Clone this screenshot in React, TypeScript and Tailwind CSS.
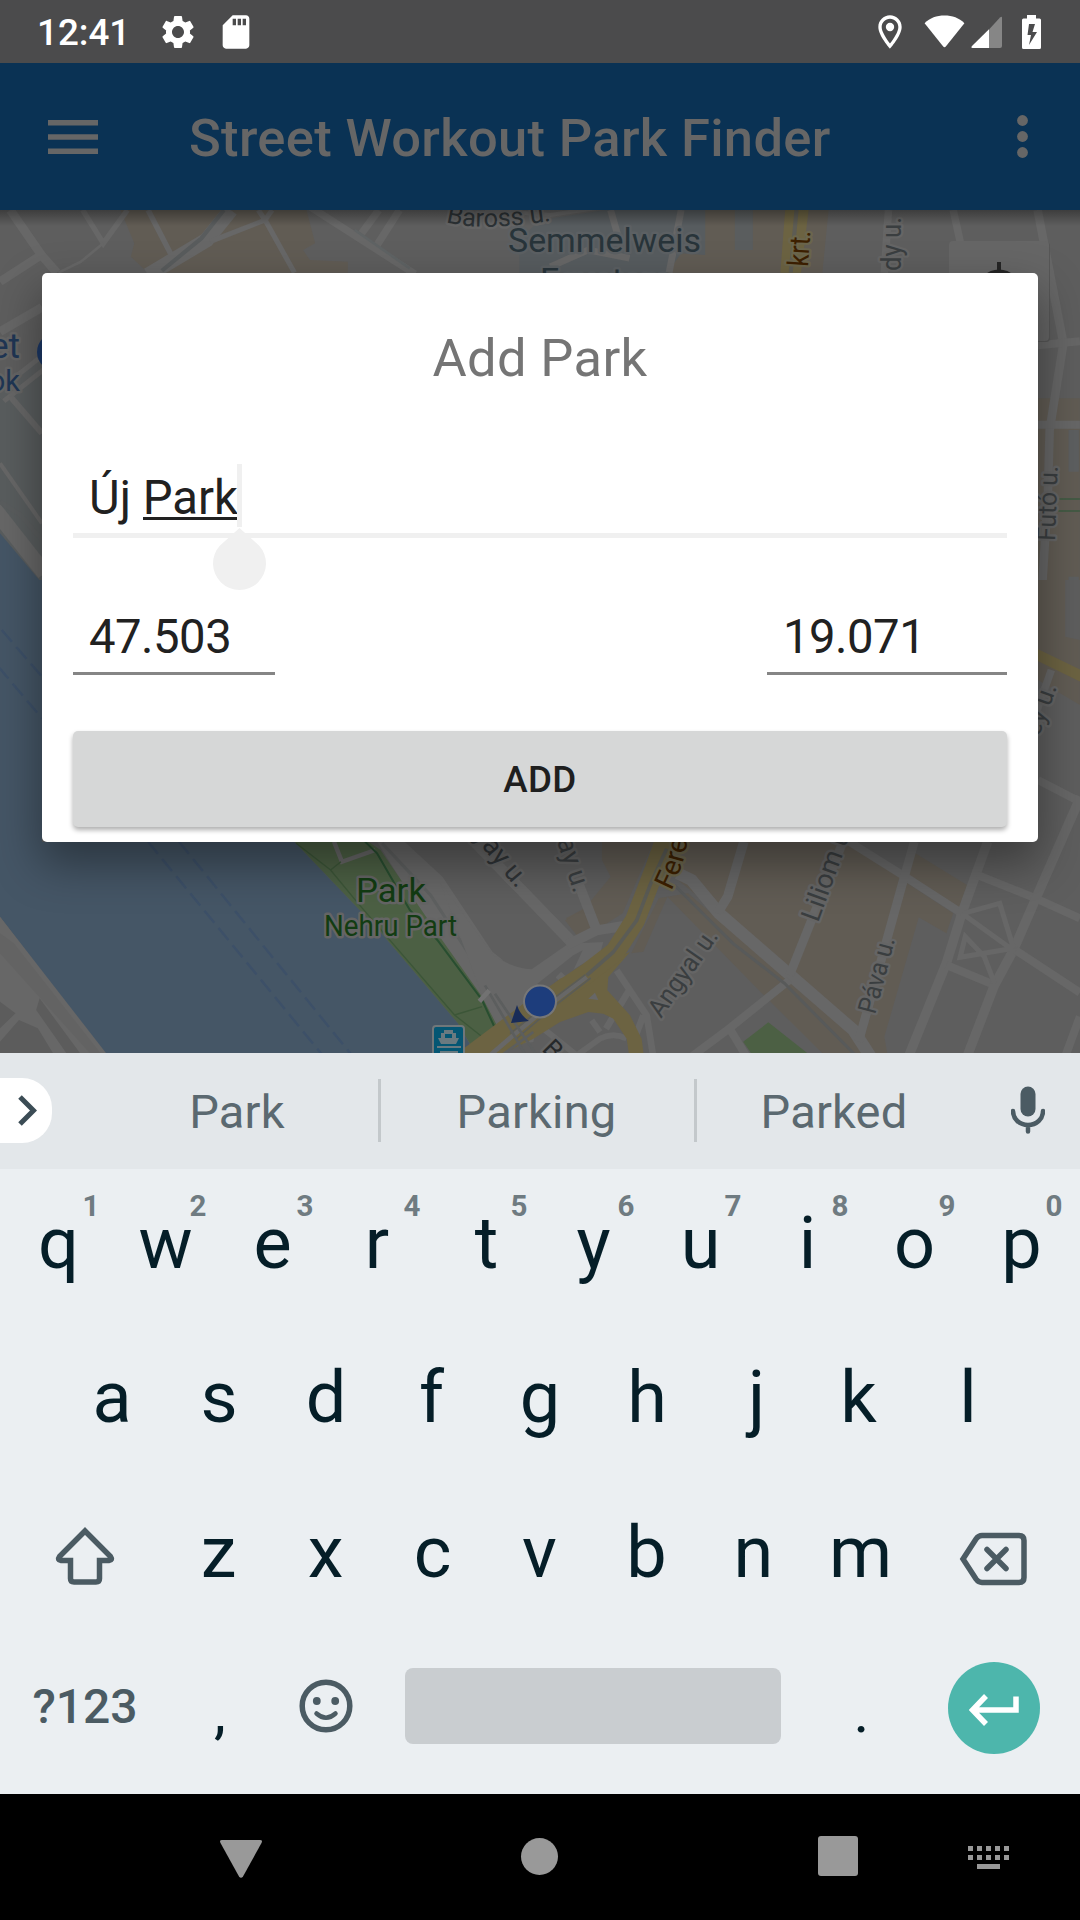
import React from "react";
import { MdSettings, MdSdStorage, MdOutlineLocationOn } from "react-icons/md";

const BASE = "#5e5e5e";
const ROAD = "#676767";
const BEIGE = "#615c54";
const GREEN = "#4c6044";
const YELLOW = "#6c6342";
const WATER = "#455666";

function StatusBar() {
  return (
    <header className="flex h-[63px] shrink-0 items-center justify-between bg-[#4b4b4c] pl-[37px] pr-[39px] text-white">
      <div className="flex items-center">
        <span className="w-[121px] pt-1 text-[36.75px] font-medium leading-none">12:41</span>
        <MdSettings className="size-10" />
        <MdSdStorage className="ml-[18px] size-10" />
      </div>
      <div className="flex items-center">
        <MdOutlineLocationOn className="mr-[14px] size-10" />
        <svg className="mr-[6px] h-[34px] w-[41px]" viewBox="0 0 41 34">
          <path d="M0.6 8.2C6 3 12.600 0.600 20.500 0.600S35 3 40.400 8.200L22 31.300Q20.500 33 19 31.300Z" fill="#fff" />
        </svg>
        <svg className="mr-5 h-[34px] w-[31px]" viewBox="0 0 31 34">
          <path d="M18 14.500L29 2.500Q31 0.600 31 3V31Q31 33 29 33H18Z" fill="#868686" />
          <path d="M18 14.300V33H1.500Q-0.500 33 1 31Z" fill="#fff" />
        </svg>
        <svg className="h-[34px] w-[19px]" viewBox="0 0 19 34">
          <path d="M5 0H14V3.500H17.500Q19 3.500 19 5V32.500Q19 34 17.500 34H1.500Q0 34 0 32.500V5Q0 3.500 1.500 3.500H5Z" fill="#fff" />
          <path d="M7 9H13L10.500 17H15L7 30L9 20H5.500Z" fill="#4b4b4c" />
        </svg>
      </div>
    </header>
  );
}

function AppBar() {
  return (
    <div className="flex h-[147px] shrink-0 items-center bg-[#0a3254] pl-12 pr-[52px] text-[#666666]">
      <svg className="h-[34px] w-[50px]" viewBox="0 0 50 34">
        <path d="M0 0H50V5.500H0ZM0 14.200H50V19.700H0ZM0 28.400H50V34H0Z" fill="currentColor" />
      </svg>
      <h1 className="ml-[91px] flex-1 whitespace-nowrap pt-1 text-[52.500px] font-medium leading-none tracking-[0.33px]">Street Workout Park Finder</h1>
      <svg className="h-[43px] w-[11px]" viewBox="0 0 11 43">
        <circle cx="5.500" cy="5.500" r="5.400" fill="currentColor" />
        <circle cx="5.500" cy="21.500" r="5.400" fill="currentColor" />
        <circle cx="5.500" cy="37.500" r="5.400" fill="currentColor" />
      </svg>
    </div>
  );
}

function MapTopLeft() {
  return (
    <g transform="translate(0 200) scale(.34435 .33333)" fill="none" stroke={ROAD}>
      <path d="M350 30H890L915 130 880 150 900 180 1010 185V218H430L380 170 390 130Z" fill={BEIGE} stroke="none" />
      <path d="M0 570L122 480V1150L0 1000Z" fill="#595d5e" stroke="none" />
      <path d="M30 30L120 165L165 218M120 165L0 245" strokeWidth="26" />
      <path d="M240 30L300 130L370 30M430 30L500 170" strokeWidth="16" />
      <path d="M300 130L235 185L170 218" strokeWidth="8" />
      <path d="M670 30L600 120L430 225" strokeWidth="44" />
      <path d="M650 30L585 115L470 212" stroke="#595c5d" strokeWidth="12" />
      <path d="M610 125L770 60L790 30M750 30L770 60L855 218" strokeWidth="15" />
      <path d="M900 20L1205 222M1160 30L1095 135M1100 30L1050 100" strokeWidth="22" />
      <path d="M1030 90L1190 205" stroke="#5f6364" strokeWidth="8" />
      <path d="M0 395L122 322" strokeWidth="26" />
      <path d="M0 590L122 490" strokeWidth="50" />
      <path d="M0 590L122 490" stroke="#5b5e5f" strokeWidth="20" />
      <path d="M30 590L122 700" strokeWidth="18" />
      <path d="M0 790L122 970" strokeWidth="12" />
      <path d="M-60 870L130 1120" strokeWidth="46" />
      <path d="M0 905L60 945L122 1020" stroke="#5a5d5e" strokeWidth="14" />
      <path d="M0 1000L122 1150V1200H0Z" fill={WATER} stroke="none" />
    </g>
  );
}

function MapTopRight() {
  return (
    <g transform="translate(540 200) scale(.34435 .33333)" fill="none" stroke={ROAD}>
      <path d="M-60 120L0 60 190 30H480V170L400 218H-60Z" fill="#575c5f" stroke="none" />
      <path d="M480 30H838L820 218H370L410 160 480 165Z" fill={BEIGE} stroke="none" />
      <path d="M566 30H618V150H566Z" fill="#5a5d5e" stroke="none" />
      <path d="M-160 30L30 45L190 20" strokeWidth="12" />
      <path d="M205 30L230 120M410 30L375 218M30 200L140 150L260 175" strokeWidth="20" />
      <path d="M712 30H780L758 218H698Z" fill={YELLOW} stroke="none" />
      <path d="M745 30L728 218" stroke="#5d5c54" strokeWidth="12" />
      <path d="M1012 30L1000 218M1200 30L1240 218" strokeWidth="22" />
      <path d="M1446 595H1568V1200H1446Z" fill={BEIGE} stroke="none" />
      <path d="M1445 30L1520 430L1480 690L1475 880L1456 1200" strokeWidth="25" />
      <path d="M1446 436L1568 424M1446 674H1568" strokeWidth="24" />
      <path d="M1550 690V815M1550 1130V1200" stroke="#5d5f60" strokeWidth="30" />
      <path d="M1505 897H1568M1505 933H1568" stroke="#3d5a40" strokeWidth="5" />
    </g>
  );
}

function MapBottomLeft() {
  return (
    <g transform="translate(0 580) scale(.34435 .33333)" fill="none" stroke={ROAD}>
      <path d="M0 0H122V785H855L1100 1050 1330 1330 1385 1430H310L0 1010Z" fill={WATER} stroke="none" />
      <path d="M0 1010L316 1430H0Z" fill={ROAD} stroke="none" />
      <path d="M0 1060L40 1090L300 1430H270L0 1120Z" fill="#636363" stroke="none" />
      <path d="M0 1265L45 1300L0 1345ZM0 1385L55 1320L110 1345L160 1430H0ZM115 1255L240 1430H200L105 1290Z" fill="#5c5c5c" stroke="none" />
      <path d="M430 785L940 1430M520 785L1025 1430M5 150L122 290M-5 260L122 415" stroke="#3d5068" strokeWidth="7" strokeDasharray="46 20" />
      <path d="M1095 785H1175L1285 890 1430 1115 1460 1140V1350L1430 1340Z" fill={ROAD} stroke="none" />
      <path d="M855 785H1070L1105 810 1270 1060 1400 1250 1445 1340 1370 1400 1330 1330 1100 1050Z" fill={GREEN} stroke="none" />
      <path d="M970 785L993 845L1090 810" strokeWidth="13" />
      <path d="M1060 785L1095 820L1190 990L1270 1080L1400 1260L1440 1350" stroke="#284e30" strokeWidth="6" />
      <path d="M860 790L960 870L1040 970L1320 1305L1400 1370M960 870L990 845M1320 1305L1400 1280" stroke="#3c5638" strokeWidth="4" />
      <path d="M1110 790L1250 945L1430 1230" stroke="#5e6060" strokeWidth="9" />
    </g>
  );
}

function MapBottomRight() {
  return (
    <g transform="translate(540 580) scale(.34435 .33333)" fill="none" stroke={ROAD}>
      <path d="M1446 0H1568V375L1446 300Z" fill={BEIGE} stroke="none" />
      <path d="M1525 0H1568V180L1525 170Z" fill={BASE} stroke="none" />
      <path d="M180 785H330L240 1000 150 1060 75 1015 130 985 205 890 180 840Z" fill={BEIGE} stroke="none" />
      <path d="M400 785H880L1060 890 1000 1130 920 1370 700 1180 520 1000 400 900Z" fill={BEIGE} stroke="none" />
      <path d="M1090 820L1240 915 1215 990 1065 890Z" fill={BEIGE} stroke="none" />
      <path d="M1060 905L1200 1000 1180 1060 1100 1012 1000 1370 1010 1430H925L990 1200Z" fill={BEIGE} stroke="none" />
      <path d="M370 950L430 940 880 1340 960 1430H830L640 1235Z" fill={BEIGE} stroke="none" />
      <path d="M370 950L345 955L265 1120L300 1115Z" fill={BEIGE} stroke="none" />
      <path d="M590 1385L663 1327 775 1418 780 1430H620Z" fill={GREEN} stroke="none" />
      <path d="M400 880L440 900L520 1000L910 1350L960 1430" strokeWidth="36" />
      <path d="M592 785L545 950L515 1000" strokeWidth="28" />
      <path d="M890 780L1060 890L1225 1000" strokeWidth="24" />
      <path d="M1087 785L1050 920L925 1385" strokeWidth="26" />
      <path d="M880 785L725 1185" strokeWidth="26" />
      <path d="M725 1200L550 1345L440 1430M550 1345L600 1430" strokeWidth="24" />
      <path d="M1300 785L1225 1000L1180 1150L1070 1430" strokeWidth="28" />
      <path d="M1180 1155L1320 1215M1270 885L1440 955L1568 1015M1446 600L1568 665" strokeWidth="24" />
      <path d="M1570 650L1440 955L1375 1110L1320 1215L1240 1430" strokeWidth="28" />
      <path d="M1380 1110L1568 1238M1568 1310L1525 1430" strokeWidth="24" />
      <path d="M1230 1000L1335 970L1375 1105M1225 1000L1380 1115M1375 1105L1220 1132L1235 1070L1290 1130L1320 1210" strokeWidth="15" />
      <path d="M390 915L560 1090L710 1210L920 1430" stroke="#585a5a" strokeWidth="9" />
      <path d="M1435 220L1575 290" stroke={YELLOW} strokeWidth="32" />
      <path d="M1485 270L1440 400" strokeWidth="22" />
    </g>
  );
}

function BridgeJunction() {
  return (
    <g transform="translate(400 842) scale(.33333)" fill="none" stroke={ROAD} strokeLinejoin="round">
      <path d="M120 120L280 340Q335 377 395 382L505 305L610 300L600 335L440 430L400 600L330 610L250 470Z" fill={ROAD} stroke="none" />
      <path d="M412 425L520 340L548 325L520 385L440 440Z" fill={BASE} stroke="none" />
      <path d="M495 235L550 205L570 262L530 280Z" fill={BEIGE} stroke="none" />
      <path d="M215 -10L515 300" strokeWidth="34" />
      <path d="M530 110L588 260M500 310L590 265L670 252" strokeWidth="30" />
      <path d="M475 398L490 412" strokeWidth="24" />
      <path d="M650 385L740 520L760 645M690 440L618 560M730 520L700 600" strokeWidth="20" />
      <path d="M430 560L530 640L600 590Q640 570 680 590M575 535L600 570" strokeWidth="18" />
      <path d="M690 330L625 405L622 445L690 520L725 590L732 645H688L680 590L640 530L610 515L565 510L480 540L400 590L290 645H190L480 410Z" fill={YELLOW} stroke="none" />
      <path d="M800 -20L765 80L705 235L645 330L560 395L470 455L380 515L200 650" stroke={YELLOW} strokeWidth="60" />
      <path d="M565 470L585 452L595 474Z" fill={ROAD} stroke="none" />
      <path d="M800 20L750 130L710 235L640 330L560 400" stroke="#5b5c56" strokeWidth="11" />
      <path d="M560 405L460 480L340 580L270 640" strokeWidth="14" />
      <path d="M556 398L456 473L330 575M572 408L470 487L350 590" stroke="#5b5c56" strokeWidth="5" />
      <path d="M255 430L380 645M285 455L410 640M305 640L400 570" stroke="#5c5e5e" strokeWidth="8" />
      <path d="M238 478L268 445" stroke="#727272" strokeWidth="14" />
    </g>
  );
}

function MapLabels() {
  return (
    <g stroke="#656565" strokeWidth="5" strokeLinejoin="round" style={{ paintOrder: "stroke" }} fill="#3a3e40" fontSize="26">
      <path id="baross" d="M446 222Q482 233 562 219" fill="none" stroke="none" />
      <path id="ferenc" d="M671 891Q683 868 687 844L692 790" fill="none" stroke="none" />
      <text fontSize="25.500" fill="#2c3235"><textPath href="#baross">Baross u.</textPath></text>
      <g fill="#28343a" fontSize="34" stroke="#5c6063">
        <text x="508" y="252" textLength="193" lengthAdjust="spacingAndGlyphs">Semmelweis</text>
        <text x="540" y="292">Egyetem</text>
      </g>
      <g fill="#1f3654" textAnchor="end">
        <text x="20" y="358" fontSize="35">et</text>
        <text x="20" y="391" fontSize="29">ok</text>
      </g>
      <text transform="translate(808 267) rotate(-86)" fontSize="29" fill="#3d2000" stroke="#6b664d" textLength="36" lengthAdjust="spacingAndGlyphs">krt.</text>
      <text transform="translate(901 271) rotate(-90)" fontSize="28" textLength="54" lengthAdjust="spacingAndGlyphs">dy u.</text>
      <text transform="translate(1055 541) rotate(-88)" textLength="75" lengthAdjust="spacingAndGlyphs">Futó u.</text>
      <text transform="translate(1057 687) rotate(-70)" textAnchor="end">ey u.</text>
      <text transform="translate(517 889) rotate(50)" textAnchor="end" fontSize="27" fill="#303437">yay u.</text>
      <text transform="translate(574 894) rotate(72)" textAnchor="end" fontSize="27">nay u.</text>
      <text fontSize="28" fill="#3d2000" stroke="#6b664d"><textPath href="#ferenc">Feren</textPath></text>
      <text transform="translate(661 1019) rotate(-55)" textLength="101" lengthAdjust="spacingAndGlyphs">Angyal u.</text>
      <text transform="translate(818 923) rotate(-70)" fontSize="27">Liliom u.</text>
      <text transform="translate(875 1015) rotate(-75)" textLength="78" lengthAdjust="spacingAndGlyphs">Páva u.</text>
      <text transform="translate(541 1050) rotate(45)" fill="#26292b">B</text>
      <g fill="#123c12">
        <text x="356" y="902" fontSize="34" textLength="70" lengthAdjust="spacingAndGlyphs">Park</text>
        <text x="324" y="936" fontSize="30" textLength="133" lengthAdjust="spacingAndGlyphs">Nehru Part</text>
      </g>
    </g>
  );
}

function CityMap() {
  return (
    <svg className="absolute inset-0 h-full w-full" viewBox="0 210 1080 843" preserveAspectRatio="none">
      <rect x="0" y="210" width="1080" height="843" fill={BASE} />
      <MapTopLeft />
      <MapTopRight />
      <MapBottomRight />
      <MapBottomLeft />
      <BridgeJunction />
      <circle cx="56" cy="352" r="19" fill="#1c3866" />
      <circle cx="540" cy="1001.500" r="16" fill="#1d3d7c" stroke="#777777" strokeWidth="2" />
      <path d="M511 1023L517 1005Q520 1015 529 1021Z" fill="#192c58" />
      <rect x="433" y="1026" width="31" height="40" rx="3" fill="#045673" stroke="#70777a" strokeWidth="2" />
      <path d="M444 1030H453V1033H456V1038H459L456 1044H441L438 1038H441V1033H444ZM437 1046H461V1048H437ZM440 1051H458V1053H440Z" fill="#6a7a80" />
      <path d="M445 1034H452V1038H445Z" fill="#045673" />
      <MapLabels />
      <rect x="950" y="242" width="100" height="100" rx="4" fill="#575757" />
      <rect x="949" y="241" width="100" height="100" rx="4" fill="#666666" />
      <circle cx="999" cy="291" r="19" fill="none" stroke="#252525" strokeWidth="5" />
      <path d="M997 262H1001V272H997Z" fill="#252525" />
    </svg>
  );
}

function AddParkDialog() {
  return (
    <section className="relative mx-[42px] mt-[63px] flex h-[569px] flex-col rounded-[5px] bg-white px-[31px] text-[47.250px] leading-none text-[#212121] shadow-[0_20px_46px_2px_rgba(0,0,0,0.38)]">
      <h2 className="pt-[59px] text-center text-[52.500px] leading-[52px] tracking-[0.35px] text-[#757575]">Add Park</h2>
      <div className="relative mt-[80px] flex h-[74px] items-center border-b-[5px] border-[#f0f0f0] pl-4">
        <span className="whitespace-pre pt-px">Új </span>
        <span className="relative pt-px">
          Park
          <i className="absolute -right-px top-[43px] h-[3px] w-[96px] bg-[#212121]" />
        </span>
        <i className="absolute left-[164px] top-0 h-[63px] w-[5px] bg-[#f0f0f0]" />
        <svg className="absolute left-[140px] top-[64px] h-[62px] w-[53px]" viewBox="0 0 53 62">
          <path d="M26.500 0L46 17.500A26.500 26.500 0 1 1 7 17.500Z" fill="#f0f0f0" />
        </svg>
      </div>
      <div className="mt-[60px] flex justify-between tracking-[-0.5px]">
        <div className="flex h-[77px] w-[202px] items-center border-b-[3px] border-[#858585] pl-4 pt-[5px]"><span>47.503</span></div>
        <div className="flex h-[77px] w-[240px] items-center border-b-[3px] border-[#858585] pl-4 pt-[5px]"><span>19.071</span></div>
      </div>
      <button className="mt-[56px] h-24 rounded-[5px] bg-[#d6d7d7] pt-[3px] text-[36.750px] font-medium tracking-[0.3px] text-[#1f1f1f] shadow-[0_3px_5px_rgba(0,0,0,0.32)]">ADD</button>
    </section>
  );
}

function Suggestions() {
  return (
    <div className="flex h-[116px] items-center bg-[#e3e7ea] pb-[2px] text-[47px] leading-none tracking-[0.2px] text-[#5b6970]">
      <div className="flex h-[65px] w-[52px] shrink-0 items-center justify-end rounded-r-[30px] bg-white pr-[15px]">
        <svg className="h-[31px] w-[19px]" viewBox="0 0 19 31">
          <path d="M2 2L15.500 15.500L2 29" fill="none" stroke="#3b4c55" strokeWidth="5" />
        </svg>
      </div>
      <span className="ml-[46px] mr-[2px] w-[278px] pt-[3px] text-center">Park</span>
      <i className="h-[63px] w-[3px] bg-[#c3c8cb]" />
      <span className="mr-[2px] w-[311px] pt-[3px] text-center">Parking</span>
      <i className="h-[63px] w-[3px] bg-[#c3c8cb]" />
      <span className="mr-[2px] w-[274px] pt-[3px] text-center">Parked</span>
      <svg className="ml-[38px] h-[48px] w-[34px]" viewBox="0 0 34 48">
        <rect x="9.500" y="0.500" width="15" height="30" rx="7.500" fill="#4b5b63" />
        <path d="M2 25C2 33 8.500 39 17 39S32 33 32 25M17 39V45.500" fill="none" stroke="#4b5b63" strokeWidth="4.500" strokeLinecap="round" />
      </svg>
    </div>
  );
}

const NUDGE: Record<string, string> = { r: "pr-[5px]", k: "pr-[5px]", j: "pl-[5px]", f: "pr-[3px]" };

function Key({ label, hint }: { label: string; hint?: string }) {
  return (
    <div className={`relative flex h-full w-[107px] items-center justify-center text-[72px] leading-none text-[#051e28] ${NUDGE[label] ?? ""}`}>
      {label}
      {hint && <span className="absolute left-[76px] top-[22px] w-5 text-center text-[29.500px] font-bold leading-[30px] text-[#6f7b81]">{hint}</span>}
    </div>
  );
}

function Keyboard() {
  const hints = "1234567890";
  return (
    <div className="h-[625px] bg-[#ebeff2] text-[#4b5b63]">
      <div className="flex h-[150px] px-[5px]">
        {"qwertyuiop".split("").map((c, i) => <Key key={c} label={c} hint={hints[i]} />)}
      </div>
      <div className="flex h-[158px] justify-center">
        {"asdfghjkl".split("").map((c) => <Key key={c} label={c} />)}
      </div>
      <div className="flex h-[152px] items-center px-[5px]">
        <div className="flex w-40 justify-center pt-[5px]">
          <svg className="h-[58px] w-[60px]" viewBox="0 0 60 58">
            <path d="M30 4L55.500 29.500Q58 33 54 33.500H44.500V51.500Q44.500 55 41 55H19Q15.500 55 15.500 51.500V33.500H6Q2 33 4.500 29.500Z" fill="none" stroke="#4b5b63" strokeWidth="5.500" />
          </svg>
        </div>
        {"zxcvbnm".split("").map((c) => <Key key={c} label={c} />)}
        <div className="flex flex-1 justify-center pr-1 pt-3">
          <svg className="h-[54px] w-[68px]" viewBox="0 0 68 54">
            <path d="M4 27L17 7Q19.500 3.500 23 3.500H60Q65 3.500 65 8.500V45.500Q65 50.500 60 50.500H23Q19.500 50.500 17 47Z" fill="none" stroke="#4b5b63" strokeWidth="5.500" />
            <path d="M28 17.500L47 36.500M47 17.500L28 36.500" fill="none" stroke="#4b5b63" strokeWidth="5.500" strokeLinecap="round" />
          </svg>
        </div>
      </div>
      <div className="flex h-[154px] items-center px-[5px]">
        <div className="w-40 pt-[2px] text-center text-[48px] font-medium leading-none">?123</div>
        <div className="w-[107px] pl-[3px] pt-[11px] text-center text-[60px] leading-none text-[#051e28]">,</div>
        <div className="flex w-[107px] justify-center">
          <svg className="h-[54px] w-[54px]" viewBox="0 0 54 54">
            <circle cx="27" cy="27" r="23.800" fill="none" stroke="#4b5b63" strokeWidth="5.500" />
            <circle cx="17.800" cy="22" r="3.900" fill="#4b5b63" />
            <circle cx="36.200" cy="22" r="3.900" fill="#4b5b63" />
            <path d="M17.500 34.500Q27 43 36.500 34.500" fill="none" stroke="#4b5b63" strokeWidth="4.500" strokeLinecap="round" />
          </svg>
        </div>
        <div className="ml-[26px] mr-[27px] h-[76px] flex-1 rounded-lg bg-[#c9cdd0]" />
        <div className="w-[107px] pt-[11px] text-center text-[60px] leading-none text-[#051e28]">.</div>
        <div className="flex w-40 justify-center pr-[2px] pt-1">
          <div className="flex size-[92px] items-center justify-center rounded-full bg-[#4db6ac] pt-1">
            <svg className="h-8 w-[50px]" viewBox="0 0 50 32">
              <path d="M17 2L3.500 16L17 30M4 16H47V2.500" fill="none" stroke="#fff" strokeWidth="5.500" />
            </svg>
          </div>
        </div>
      </div>
    </div>
  );
}

function NavBar() {
  return (
    <nav className="flex h-[126px] items-center bg-black pb-[2px] pl-[220px] text-[#999999]">
      <svg className="mt-[5px] h-[38px] w-[42px]" viewBox="0 0 42 38">
        <path d="M2 0H40Q43 0 41.500 3L23 36.500Q21 39 19 36.500L0.500 3Q-1 0 2 0Z" fill="currentColor" />
      </svg>
      <i className="ml-[259px] size-[37px] rounded-full bg-[#999999]" />
      <i className="ml-[260px] size-10 rounded-[3px] bg-[#999999]" />
      <svg className="ml-[110px] mt-[2px] h-[23px] w-[41px]" viewBox="0 0 41 23">
        <path d="M0 2.500H41M0 11.500H41" fill="none" stroke="currentColor" strokeWidth="5" strokeDasharray="5 4" />
        <path d="M9 18H32V23H9Z" fill="currentColor" />
      </svg>
    </nav>
  );
}

export default function App() {
  return (
    <div className="flex h-[1920px] w-[1080px] flex-col overflow-hidden font-[Roboto,sans-serif]">
      <StatusBar />
      <AppBar />
      <main className="relative h-[843px] shrink-0 overflow-hidden">
        <CityMap />
        <div className="absolute inset-x-0 top-0 h-4 bg-linear-to-b from-black/35 to-transparent" />
        <div className="flow-root">
          <AddParkDialog />
        </div>
      </main>
      <Suggestions />
      <Keyboard />
      <NavBar />
    </div>
  );
}
